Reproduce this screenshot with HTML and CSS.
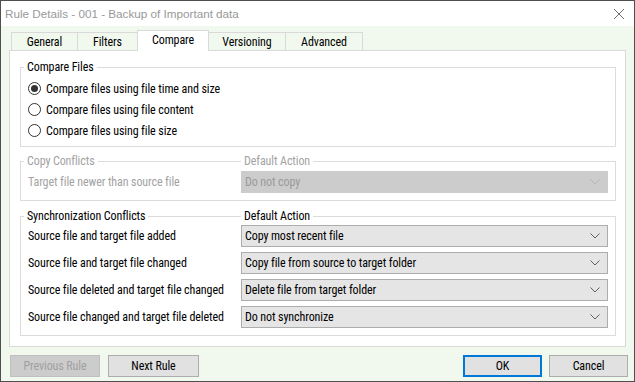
FILE: index.html
```html
<!DOCTYPE html>
<html lang="en">
<head>
    <meta charset="UTF-8">
    <title>Rule Details - 001 - Backup of Important data</title>
    <link rel="stylesheet" href="styles.css">
</head>
<body>
    <div class="window">
        <div class="titlebar">
            <span class="title">Rule Details - 001 - Backup of Important data</span>
            <svg class="close" width="12" height="12" viewBox="0 0 12 12">
                <path d="M1 1 L11 11 M11 1 L1 11" stroke="#6f6f6f" stroke-width="1" fill="none"/>
            </svg>
        </div>

        <div class="client">
            <div class="tabs">
                <div class="tab t-general">General</div>
                <div class="tab t-filters">Filters</div>
                <div class="tab t-compare active">Compare</div>
                <div class="tab t-versioning">Versioning</div>
                <div class="tab t-advanced">Advanced</div>
            </div>

            <div class="panel">
                <!-- compare method -->
                <div class="group compare">
                    <div class="group-head">
                        <span class="legend">Compare Files</span>
                    </div>
                    <div class="radios">
                        <div class="radio checked"><span class="circle"></span>Compare files using file time and size</div>
                        <div class="radio"><span class="circle"></span>Compare files using file content</div>
                        <div class="radio"><span class="circle"></span>Compare files using file size</div>
                    </div>
                </div>

                <!-- copy conflicts (disabled) -->
                <div class="group conflicts disabled">
                    <div class="group-head">
                        <span class="legend">Copy Conflicts</span>
                        <span class="legend">Default Action</span>
                    </div>
                    <div class="row">
                        <span class="label">Target file newer than source file</span>
                        <div class="select">Do not copy
                            <svg class="chev" width="10" height="6" viewBox="0 0 10 6"><path d="M0.5 0.5 L5 5 L9.5 0.5" stroke="#b5b5b5" fill="none"/></svg>
                        </div>
                    </div>
                </div>

                <!-- sync conflicts -->
                <div class="group conflicts sync">
                    <div class="group-head">
                        <span class="legend">Synchronization Conflicts</span>
                        <span class="legend">Default Action</span>
                    </div>
                    <div class="row">
                        <span class="label">Source file and target file added</span>
                        <div class="select">Copy most recent file
                            <svg class="chev" width="10" height="6" viewBox="0 0 10 6"><path d="M0.5 0.5 L5 5 L9.5 0.5" stroke="#606060" fill="none"/></svg>
                        </div>
                    </div>
                    <div class="row">
                        <span class="label">Source file and target file changed</span>
                        <div class="select">Copy file from source to target folder
                            <svg class="chev" width="10" height="6" viewBox="0 0 10 6"><path d="M0.5 0.5 L5 5 L9.5 0.5" stroke="#606060" fill="none"/></svg>
                        </div>
                    </div>
                    <div class="row">
                        <span class="label">Source file deleted and target file changed</span>
                        <div class="select">Delete file from target folder
                            <svg class="chev" width="10" height="6" viewBox="0 0 10 6"><path d="M0.5 0.5 L5 5 L9.5 0.5" stroke="#606060" fill="none"/></svg>
                        </div>
                    </div>
                    <div class="row">
                        <span class="label">Source file changed and target file deleted</span>
                        <div class="select">Do not synchronize
                            <svg class="chev" width="10" height="6" viewBox="0 0 10 6"><path d="M0.5 0.5 L5 5 L9.5 0.5" stroke="#606060" fill="none"/></svg>
                        </div>
                    </div>
                </div>
            </div>

            <div class="buttons">
                <button class="btn prev" disabled>Previous Rule</button>
                <button class="btn next">Next Rule</button>
                <span class="spacer"></span>
                <button class="btn ok">OK</button>
                <button class="btn cancel">Cancel</button>
            </div>
        </div>
    </div>
</body>
</html>
```

FILE: styles.css
```css
body {
    margin: 0;
    font-family: "Roboto Condensed", "Liberation Sans", Arial, sans-serif;
    font-size: 12px;
    letter-spacing: -0.1px;
    color: #000;
}
.window {
    width: 635px;
    height: 382px;
    box-sizing: border-box;
    border: 1px solid #4f4f4f;
    display: flex;
    flex-direction: column;
    background: #f1f9ee;
}
.titlebar {
    height: 25px;
    background: #fff;
    display: flex;
    align-items: center;
    padding: 0 9px 0 4px;
}
.title {
    flex: 1;
    color: #999;
    font-family: "Liberation Sans", Arial, sans-serif;
    font-size: 11.7px;
    letter-spacing: 0;
    padding-bottom: 1px;
}
.close {
    display: block;
}
.client {
    flex: 1;
    padding: 4px 6px 0 8px;
}

/* tabs */
.tabs {
    display: flex;
    align-items: flex-end;
    height: 20px;
    padding-left: 2px;
    position: relative;
    z-index: 1;
}
.tab {
    box-sizing: border-box;
    height: 18px;
    border: 1px solid #d9d9d9;
    border-bottom: none;
    margin-left: -1px;
    display: flex;
    align-items: center;
    justify-content: center;
    padding-top: 1px;
    background: #f1f9ee;
}
.tab:first-child { margin-left: 0; }
.t-general { width: 67px; }
.t-filters { width: 61px; }
.t-compare { width: 72px; }
.t-versioning { width: 78px; }
.t-advanced { width: 78px; }
.tab.active {
    height: 21px;
    margin-bottom: -1px;
    background: #fff;
    padding-top: 0;
    padding-bottom: 3px;
}

.panel {
    width: 617px;
    box-sizing: border-box;
    background: #fff;
    border: 1px solid #d9d9d9;
    padding: 16px 9px 10px 10px;
}

/* group boxes */
.group {
    border: 1px solid #dcdcdc;
    width: 596px;
    box-sizing: border-box;
}
.group + .group { margin-top: 14px; }
.group.sync { margin-top: 15px; }
.group-head {
    height: 16px;
    margin-top: -9px;
    padding-left: 3px;
    display: grid;
    grid-template-columns: 217px 1fr;
    align-items: center;
}
.legend {
    justify-self: start;
    background: #fff;
    padding: 0 3px;
    line-height: 16px;
}
.disabled .legend,
.disabled .label {
    color: #a3a3a3;
}

.radios {
    margin-top: 3px;
    padding: 0 0 5px 7px;
}
.radio {
    height: 21px;
    display: flex;
    align-items: center;
}
.circle {
    width: 13px;
    height: 13px;
    box-sizing: border-box;
    border: 1px solid #333;
    border-radius: 50%;
    margin-right: 5px;
    display: flex;
    align-items: center;
    justify-content: center;
}
.checked .circle::after {
    content: "";
    width: 7px;
    height: 7px;
    border-radius: 50%;
    background: #333;
}

.conflicts {
    padding: 0 7px 7px 7px;
}
.conflicts .group-head {
    margin-left: -7px;
    margin-right: -7px;
}
.row {
    display: grid;
    grid-template-columns: 213px 1fr;
    align-items: center;
    margin-top: 5px;
}
.group-head + .row { margin-top: 2px; }
.sync .group-head + .row { margin-top: 1px; }
.label {
    white-space: nowrap;
}
.select {
    height: 22px;
    box-sizing: border-box;
    border: 1px solid #adadad;
    background: #e5e5e5;
    display: flex;
    align-items: center;
    padding: 0 7px 1px 3px;
}
.chev {
    margin-left: auto;
    display: block;
}
.disabled .select {
    background: #cccccc;
    border-color: #cccccc;
    color: #9a9a9a;
}

/* bottom buttons */
.buttons {
    display: flex;
    margin-top: 8px;
    padding-left: 1px;
}
.btn {
    font-family: inherit;
    font-size: 12px;
    letter-spacing: inherit;
    height: 22px;
    box-sizing: border-box;
    border: 1px solid #adadad;
    background: #e1e1e1;
    color: #000;
    padding: 0 0 1px;
    margin: 0;
}
.prev {
    width: 90px;
    background: #cccccc;
    border-color: #bfbfbf;
    color: #a0a0a0;
}
.next {
    width: 91px;
    margin-left: 8px;
}
.spacer { flex: 1; }
.ok {
    width: 79px;
    border: 2px solid #0078d7;
}
.cancel {
    width: 79px;
    margin-left: 7px;
}
```
